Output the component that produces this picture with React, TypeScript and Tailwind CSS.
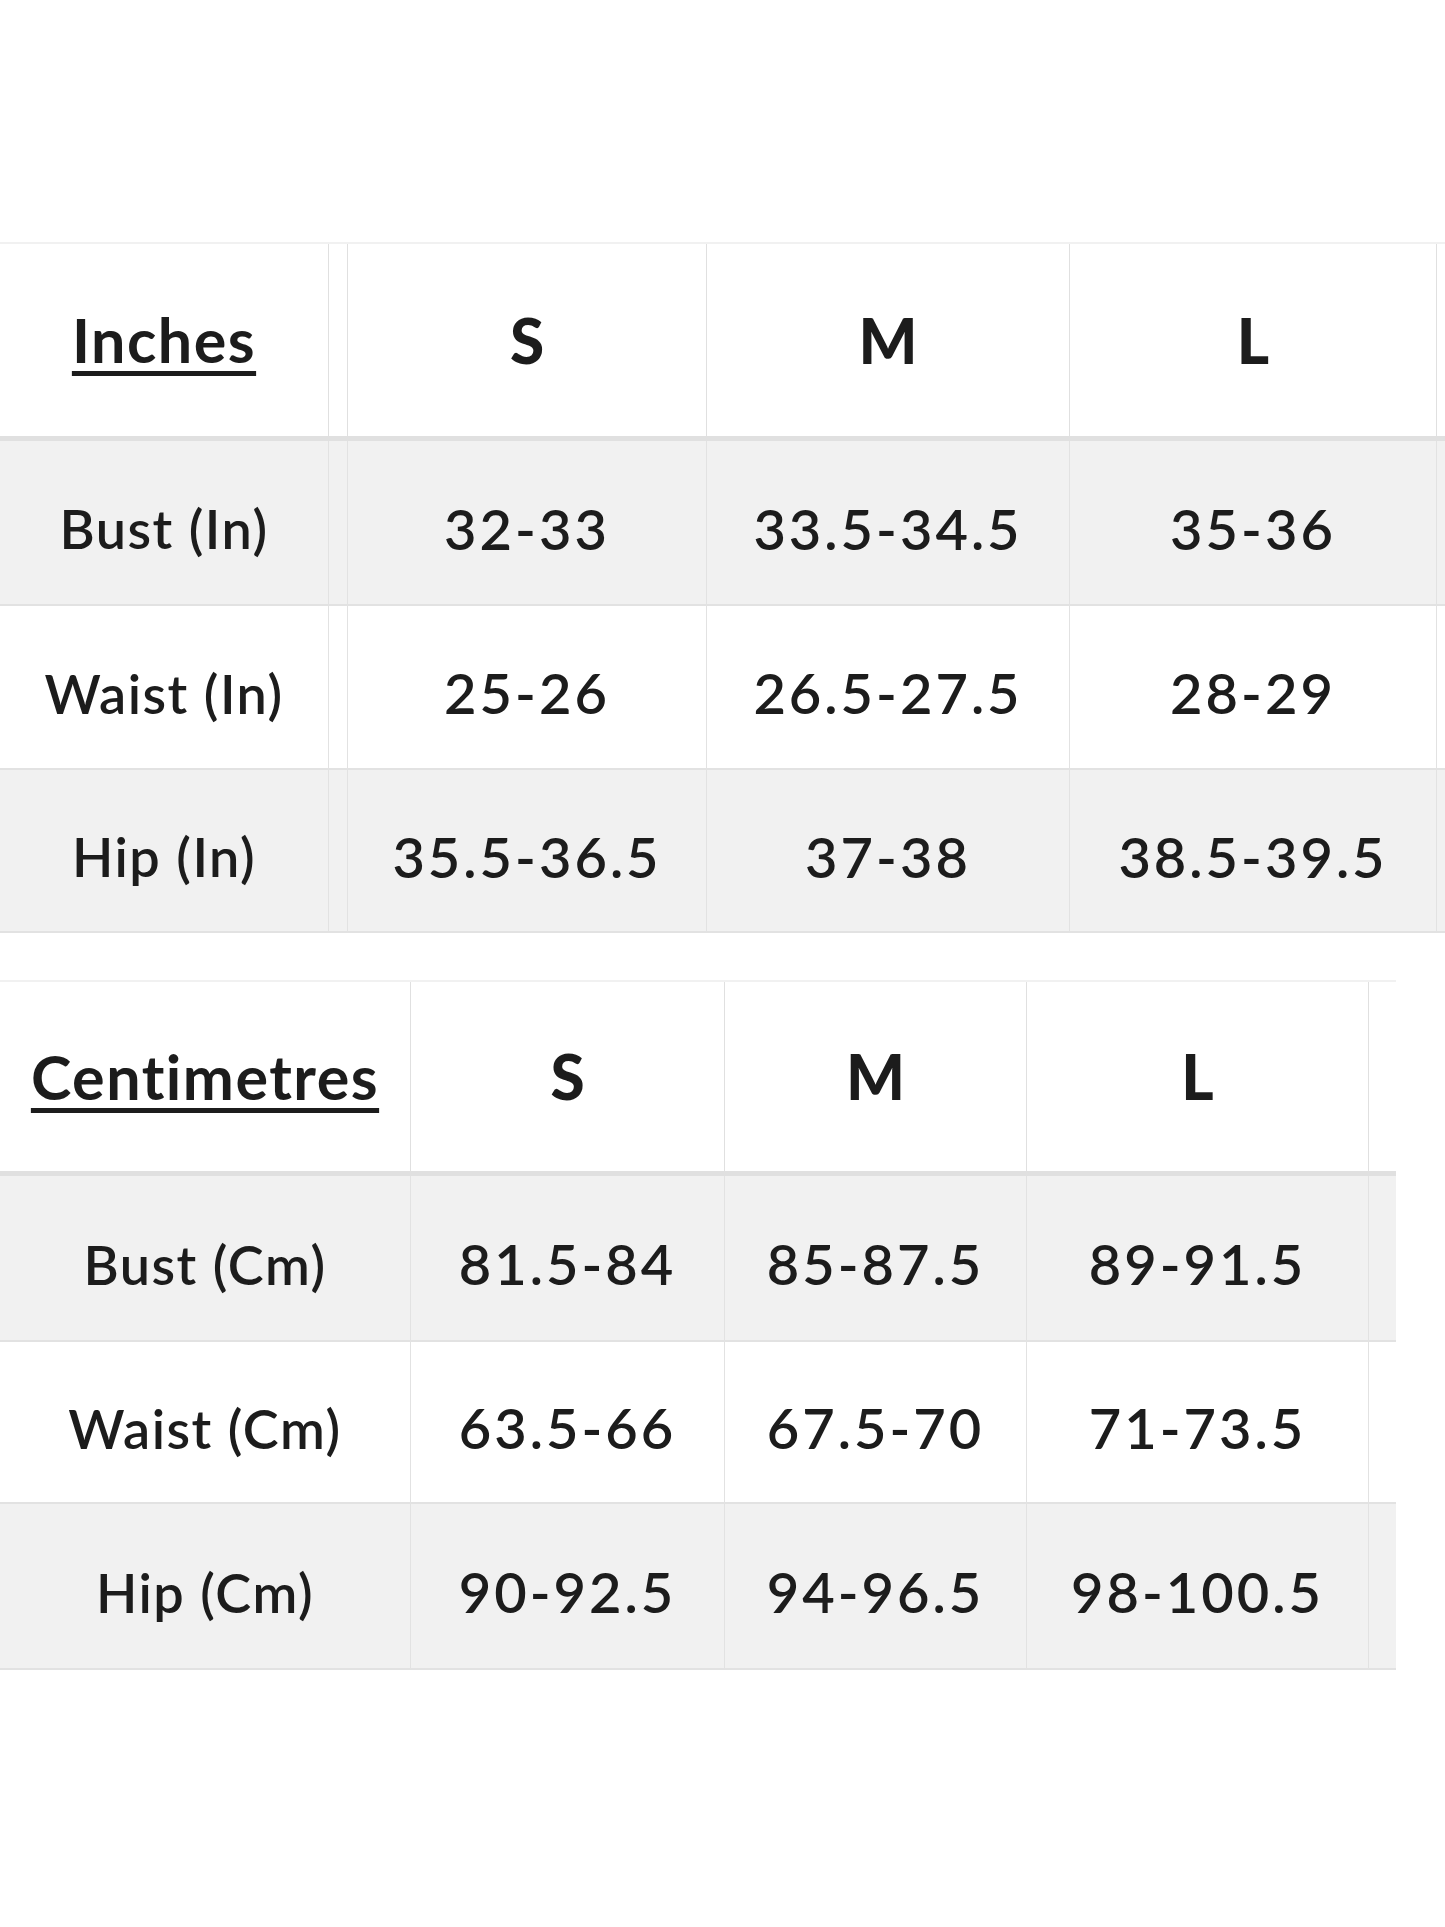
import React from "react";

const font = { fontFamily: "Lato, 'Open Sans', 'Liberation Sans', sans-serif" };

type RowData = { label: string; values: string[] };

function Table1() {
  const rows: RowData[] = [
    { label: "Bust (In)", values: ["32-33", "33.5-34.5", "35-36"] },
    { label: "Waist (In)", values: ["25-26", "26.5-27.5", "28-29"] },
    { label: "Hip (In)", values: ["35.5-36.5", "37-38", "38.5-39.5"] },
  ];
  const heights = ["h-[165px]", "h-[164px]", "h-[163px]"];
  return (
    <div className="grid grid-cols-[329px_19px_359px_363px_367px_1fr] border-t-2 border-[#f1f1f1] text-[#1c1c1c]">
      <div className="h-[197px] flex items-center justify-center border-r border-b-[5px] border-[#e0e0e0] bg-white">
        <span className="text-[61px] font-bold tracking-[1.5px] underline decoration-[5px] underline-offset-[8px]">Inches</span>
      </div>
      <div className="h-[197px] border-r border-b-[5px] border-[#e0e0e0] bg-white" />
      {["S", "M", "L"].map((s) => (
        <div key={s} className="h-[197px] flex items-center justify-center border-r border-b-[5px] border-[#e0e0e0] bg-white">
          <span className="text-[62px] font-black">{s}</span>
        </div>
      ))}
      <div className="h-[197px] border-b-[5px] border-[#e0e0e0] bg-white" />
      {rows.map((r, i) => {
        const bg = i % 2 === 0 ? "bg-[#f1f1f1]" : "bg-white";
        const h = heights[i];
        return (
          <React.Fragment key={r.label}>
            <div className={`${h} ${bg} flex items-center justify-center pt-[12px] border-r border-b-2 border-[#e2e2e2]`}>
              <span className="text-[54px] font-semibold tracking-[1.5px]">{r.label}</span>
            </div>
            <div className={`${h} ${bg} border-r border-b-2 border-[#e2e2e2]`} />
            {r.values.map((v, j) => (
              <div key={j} className={`${h} ${bg} flex items-center justify-center pt-[12px] border-r border-b-2 border-[#e2e2e2]`}>
                <span className="text-[56px] font-semibold tracking-[3px]">{v}</span>
              </div>
            ))}
            <div className={`${h} ${bg} border-b-2 border-[#e2e2e2]`} />
          </React.Fragment>
        );
      })}
    </div>
  );
}

function Table2() {
  const rows: RowData[] = [
    { label: "Bust (Cm)", values: ["81.5-84", "85-87.5", "89-91.5"] },
    { label: "Waist (Cm)", values: ["63.5-66", "67.5-70", "71-73.5"] },
    { label: "Hip (Cm)", values: ["90-92.5", "94-96.5", "98-100.5"] },
  ];
  const heights = ["h-[166px]", "h-[162px]", "h-[166px]"];
  return (
    <div className="w-[1396px] grid grid-cols-[411px_314px_302px_342px_1fr] border-t-2 border-[#f1f1f1] text-[#1c1c1c]">
      <div className="h-[194px] flex items-center justify-center border-r border-b-[5px] border-[#e0e0e0] bg-white">
        <span className="text-[61px] font-bold tracking-[1.5px] underline decoration-[5px] underline-offset-[8px]">Centimetres</span>
      </div>
      {["S", "M", "L"].map((s) => (
        <div key={s} className="h-[194px] flex items-center justify-center border-r border-b-[5px] border-[#e0e0e0] bg-white">
          <span className="text-[62px] font-black">{s}</span>
        </div>
      ))}
      <div className="h-[194px] border-b-[5px] border-[#e0e0e0] bg-white" />
      {rows.map((r, i) => {
        const bg = i % 2 === 0 ? "bg-[#f1f1f1]" : "bg-white";
        const h = heights[i];
        return (
          <React.Fragment key={r.label}>
            <div className={`${h} ${bg} flex items-center justify-center pt-[12px] border-r border-b-2 border-[#e2e2e2]`}>
              <span className="text-[54px] font-semibold tracking-[1.5px]">{r.label}</span>
            </div>
            {r.values.map((v, j) => (
              <div key={j} className={`${h} ${bg} flex items-center justify-center pt-[12px] border-r border-b-2 border-[#e2e2e2]`}>
                <span className="text-[56px] font-semibold tracking-[3px]">{v}</span>
              </div>
            ))}
            <div className={`${h} ${bg} border-b-2 border-[#e2e2e2]`} />
          </React.Fragment>
        );
      })}
    </div>
  );
}

export default function App() {
  return (
    <div className="w-[1445px] h-[1927px] bg-white overflow-hidden" style={font}>
      <div className="pt-[242px]">
        <Table1 />
      </div>
      <div className="pt-[47px]">
        <Table2 />
      </div>
    </div>
  );
}
